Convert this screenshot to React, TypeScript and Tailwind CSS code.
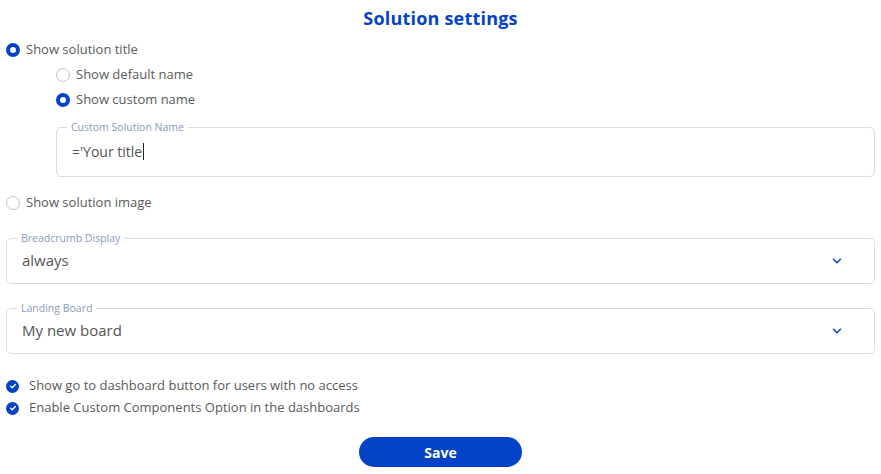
import { ChevronDown } from "lucide-react";

const font = { fontFamily: '"Open Sans", "Liberation Sans", sans-serif' };

function Radio({ checked, label }: { checked: boolean; label: string }) {
  return (
    <label className="flex h-[25px] items-center gap-[6px] text-[13px] text-[#5a5a5a]">
      <span
        className={
          checked
            ? "h-[14px] w-[14px] rounded-full border-[4px] border-[#0443c5] bg-white"
            : "h-[14px] w-[14px] rounded-full border border-[#c4c4c4] bg-white"
        }
      />
      <span>{label}</span>
    </label>
  );
}

function Check({ label }: { label: string }) {
  return (
    <label className="flex h-[22px] items-center gap-[10px] text-[13px] text-[#5a5a5a]">
      <span className="flex h-[13px] w-[13px] items-center justify-center rounded-full bg-[#0443c5]">
        <svg width="8" height="8" viewBox="0 0 8 8" fill="none">
          <path d="M1.6 4.2 L3.2 5.7 L6.4 2.4" stroke="white" strokeWidth="1.4" strokeLinecap="round" strokeLinejoin="round" />
        </svg>
      </span>
      {label}
    </label>
  );
}

function Field({
  label,
  value,
  select,
  className,
}: {
  label: string;
  value: string;
  select?: boolean;
  className?: string;
}) {
  return (
    <fieldset className={"rounded-[5px] border border-[#dcdcdc] pl-[10px] pr-[30px] " + (className ?? "")}>
      <legend className="px-[4px] text-[10.5px] leading-[10px] text-[#8a9bbb]">{label}</legend>
      <div
        className={
          select
            ? "flex h-[40px] items-center justify-between pb-[5px] pl-[5px] text-[15px] text-[#555]"
            : "flex h-[44px] items-center justify-between pb-[5px] pl-[5px] text-[15px] text-[#555]"
        }
      >
        {select ? (
          <>
            <span>{value}</span>
            <ChevronDown className="h-[14px] w-[14px] text-[#0443c5]" strokeWidth={2.5} />
          </>
        ) : (
          <span className="flex items-center text-[14px]">
            {value}
            <span className="ml-[1px] inline-block h-[17px] w-px bg-[#222]" />
          </span>
        )}
      </div>
    </fieldset>
  );
}

export default function App() {
  return (
    <div className="h-[474px] w-[881px] bg-white" style={font}>
      <div className="px-[6px]">
        <h1 className="pt-[6px] text-center text-[18px] font-bold leading-[24px] tracking-[0.2px] text-[#0443c5]">
          Solution settings
        </h1>

        <div className="mt-[7px]">
          <Radio checked label="Show solution title" />
          <div className="pl-[50px]">
            <Radio checked={false} label="Show default name" />
            <Radio checked label="Show custom name" />
            <Field label="Custom Solution Name" value="='Your title" className="mt-[10px]" />
          </div>
        </div>

        <div className="mt-[13px]">
          <Radio checked={false} label="Show solution image" />
        </div>

        <Field label="Breadcrumb Display" value="always" select className="mt-[18px]" />
        <Field label="Landing Board" value="My new board" select className="mt-[19px]" />

        <div className="mt-[21px]">
          <Check label="Show go to dashboard button for users with no access" />
          <Check label="Enable Custom Components Option in the dashboards" />
        </div>

        <div className="mt-[18px] flex justify-center">
          <button className="h-[30px] w-[163px] rounded-full bg-[#0443c5] text-[14px] font-bold text-white">
            Save
          </button>
        </div>
      </div>
    </div>
  );
}
